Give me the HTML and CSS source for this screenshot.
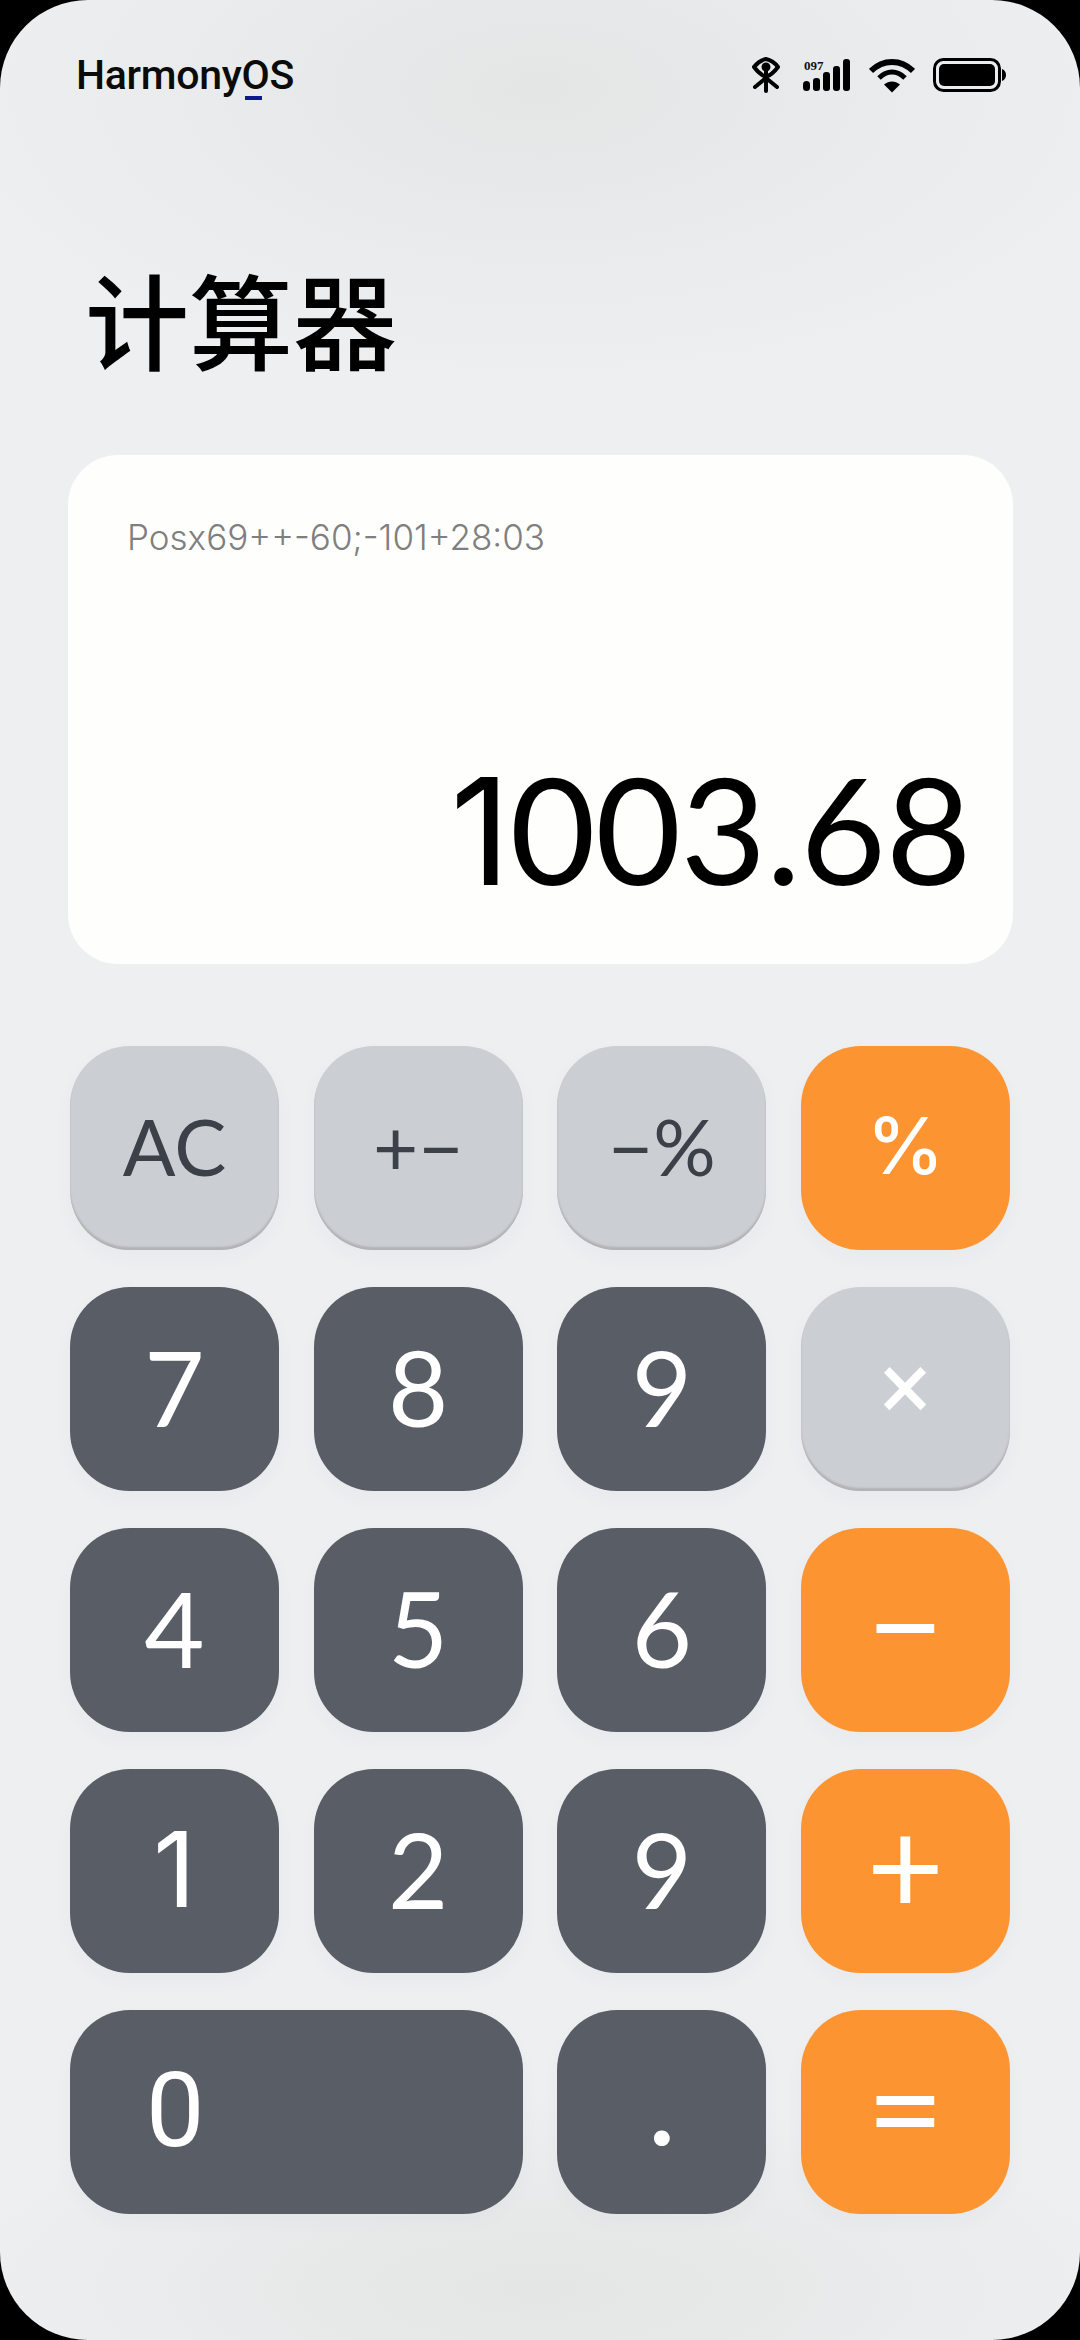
FILE: index.html
```html
<!DOCTYPE html>
<html lang="zh">
<head>
<meta charset="utf-8">
<title>计算器</title>
<link rel="stylesheet" href="styles.css">
</head>
<body>
<main class="app">
  <header class="status">
    <span class="brand">Harmony<span class="brand-o">O</span>S</span>
    <div class="status-icons">
      <svg class="ico-bt" width="30" height="36" viewBox="0 0 30 36" fill="none" stroke="#000" stroke-width="4" stroke-linecap="round" stroke-linejoin="round">
        <path d="M15 2 C20 3 24 6 27 10 C24 14 20 18 15 20 C10 18 6 14 3 10 C6 6 10 3 15 2Z"/>
        <path d="M15 8V34M15 21L4 30M15 21L26 30"/>
        <circle cx="15" cy="10" r="2.5" fill="#000"/>
      </svg>
      <svg class="ico-signal" width="48" height="33" viewBox="0 0 48 33">
        <text class="sig-text" x="1" y="11">097</text>
        <rect x="0" y="22" width="7" height="10" rx="3.5"/>
        <rect x="10" y="19" width="7" height="13" rx="3"/>
        <rect x="20" y="13" width="7" height="19" rx="3"/>
        <rect x="30" y="7" width="7" height="25" rx="3"/>
        <rect x="40" y="0" width="7" height="32" rx="3"/>
      </svg>
      <svg class="ico-wifi" width="46" height="35" viewBox="0 0 46 35" fill="none" stroke="#000">
        <path d="M2 13 C14 1 32 1 44 13" stroke-width="6"/>
        <path d="M10 20 C18 12 28 12 36 20" stroke-width="5"/>
        <path d="M15 26.500 L23 34.500 L31 26.500 C26 22.500 20 22.500 15 26.500Z" fill="#000" stroke="none"/>
      </svg>
      <svg class="ico-batt" width="73" height="34" viewBox="0 0 73 34">
        <rect x="1.500" y="1.500" width="65" height="31" rx="9" fill="none" stroke="#000" stroke-width="3"/>
        <rect x="6" y="6" width="56" height="22" rx="5" fill="#000"/>
        <path d="M69 11 C72 12 73 15 73 17 C73 19 72 22 69 23Z" fill="#000"/>
      </svg>
    </div>
  </header>

  <h1 class="title">计算器</h1>

  <section class="display">
    <p class="expr">Posx69++-60;-101+28:03</p>
    <p class="result"><span class="one">1</span>003.68</p>
  </section>

  <section class="keypad">
    <button class="key key-light">AC</button>
    <button class="key key-light">+−</button>
    <button class="key key-light">−%</button>
    <button class="key key-orange key-pct">%</button>

    <button class="key key-dark">7</button>
    <button class="key key-dark">8</button>
    <button class="key key-dark">9</button>
    <button class="key key-light key-times">×</button>

    <button class="key key-dark">4</button>
    <button class="key key-dark">5</button>
    <button class="key key-dark">6</button>
    <button class="key key-orange key-op">−</button>

    <button class="key key-dark one">1</button>
    <button class="key key-dark">2</button>
    <button class="key key-dark">9</button>
    <button class="key key-orange key-op">+</button>

    <button class="key key-dark key-wide">0</button>
    <button class="key key-dark key-dot">.</button>
    <button class="key key-orange key-op">=</button>
  </section>
</main>
</body>
</html>
```
FILE: styles.css
```css
* { box-sizing: border-box; }
html, body { margin: 0; padding: 0; background: #000; }
.app {
  width: 1080px;
  height: 2340px;
  overflow: hidden;
  border-radius: 88px;
  background:
    radial-gradient(ellipse 620px 300px at 50% 90px, #e4e6e6 0%, rgba(228,230,230,0) 100%),
    radial-gradient(ellipse 620px 200px at 50% 2290px, #e4e6e5 0%, rgba(228,230,229,0) 100%),
    #edeff1;
  font-family: Lato, "Noto Sans CJK SC", sans-serif;
  padding-top: 55px;
}
.status {
  display: flex;
  justify-content: space-between;
  align-items: center;
  height: 40px;
  padding: 0 74px 0 76px;
}
.brand {
  font-family: Roboto, sans-serif;
  font-size: 41px;
  font-weight: 500;
  color: #0b0b0b;
  letter-spacing: -0.3px;
}
.brand-o { position: relative; }
.brand-o::after {
  content: "";
  position: absolute;
  left: 4px;
  right: 7px;
  bottom: -1px;
  height: 4px;
  background: #0d1a8a;
}
.status-icons {
  display: flex;
  align-items: center;
  gap: 18px;
}
.ico-signal { margin-left: 4px; }
.ico-signal rect { fill: #000; }
.sig-text { font-family: "Liberation Serif", serif; font-size: 13px; font-weight: 700; fill: #111; }
.title {
  margin: 163px 0 0 85px;
  font-family: "Noto Sans CJK SC", sans-serif;
  font-size: 104px;
  font-weight: 500;
  line-height: 120px;
  color: #000;
}
.display {
  margin: 77px 67px 0 68px;
  height: 509px;
  padding: 60px 42px 0 59px;
  background: #fefefc;
  border-radius: 50px;
  display: flex;
  flex-direction: column;
  justify-content: space-between;
}
.expr {
  margin: 0;
  font-family: Inter, sans-serif;
  font-size: 35px;
  line-height: 44px;
  font-weight: 300;
  color: #7f7f7f;
}
.result {
  margin: 0 0 57px;
  text-align: right;
  font-size: 148px;
  line-height: 150px;
  letter-spacing: -0.5px;
  color: #000;
}
.one { font-family: Inter, sans-serif; }
.keypad {
  margin: 82px 0 0 70px;
  width: 940px;
  display: grid;
  grid-template-columns: repeat(4, 209px);
  grid-auto-rows: 204px;
  column-gap: 34.67px;
  row-gap: 37px;
}
.key {
  border: 0;
  padding: 0 0 5px;
  margin: 0;
  border-radius: 60px;
  font-family: Lato, sans-serif;
  font-size: 104px;
  font-weight: 400;
  line-height: 1;
  display: flex;
  align-items: center;
  justify-content: center;
  box-shadow: 0 8px 20px rgba(60,70,80,.03);
}
.key.one { font-family: Inter, sans-serif; }
.key-dark { background: #595d66; color: #fff; }
.key-dot { padding-bottom: 14px; font-weight: 700; }
.key-light {
  background: #cbced2;
  color: #3b4049;
  font-size: 78px;
  box-shadow: inset 0 -3px 2px #b1b3b6, 0 8px 20px rgba(60,70,80,.03);
}
.key-orange { background: #fd9432; color: #fff; }
.key-pct { font-family: Inter, sans-serif; font-size: 78px; font-weight: 500; }
.key-op { font-size: 134px; padding-bottom: 14px; }
.key-times { color: #fff; font-family: Roboto, sans-serif; font-size: 96px; }
.key-wide {
  grid-column: span 2;
  justify-content: flex-start;
  padding-left: 76px;
  padding-bottom: 3px;
  font-family: Roboto, sans-serif;
}
```
